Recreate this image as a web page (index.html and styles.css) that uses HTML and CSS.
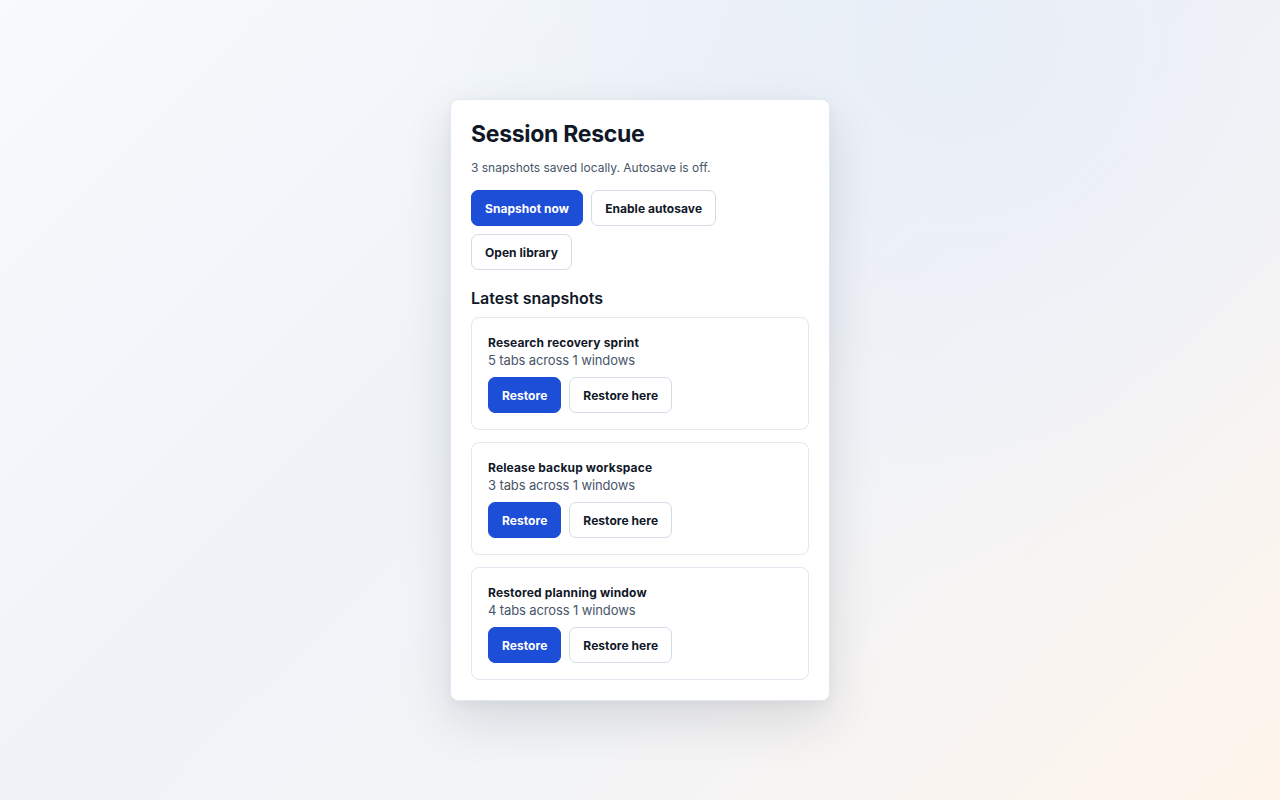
FILE: index.html
```html
<!DOCTYPE html>
<html lang="en">
<head>
<meta charset="utf-8">
<title>Session Rescue</title>
<link rel="stylesheet" href="styles.css">
</head>
<body>
<main class="panel">
  <h1 class="title">Session Rescue</h1>
  <p class="status">3 snapshots saved locally. Autosave is off.</p>
  <div class="actions">
    <button class="btn btn-primary">Snapshot now</button>
    <button class="btn">Enable autosave</button>
    <button class="btn">Open library</button>
  </div>
  <h2 class="section-title">Latest snapshots</h2>
  <ul class="snapshots">
    <li class="snapshot">
      <div class="snap-name">Research recovery sprint</div>
      <div class="snap-meta">5 tabs across 1 windows</div>
      <div class="snap-actions">
        <button class="btn btn-primary">Restore</button>
        <button class="btn">Restore here</button>
      </div>
    </li>
    <li class="snapshot">
      <div class="snap-name">Release backup workspace</div>
      <div class="snap-meta">3 tabs across 1 windows</div>
      <div class="snap-actions">
        <button class="btn btn-primary">Restore</button>
        <button class="btn">Restore here</button>
      </div>
    </li>
    <li class="snapshot">
      <div class="snap-name">Restored planning window</div>
      <div class="snap-meta">4 tabs across 1 windows</div>
      <div class="snap-actions">
        <button class="btn btn-primary">Restore</button>
        <button class="btn">Restore here</button>
      </div>
    </li>
  </ul>
</main>
</body>
</html>
```

FILE: styles.css
```css
* { box-sizing: border-box; }

html, body { height: 100%; }

body {
  margin: 0;
  min-height: 100vh;
  display: flex;
  align-items: center;
  justify-content: center;
  font-family: Inter, "Liberation Sans", sans-serif;
  color: #0f172a;
  background:
    radial-gradient(circle at 75% 5%, rgba(228, 236, 248, 0.6) 0%, rgba(228, 236, 248, 0) 45%),
    linear-gradient(135deg, #f8fafc 0%, #eff3f8 40%, #f3f4f6 65%, #fff5ec 100%);
}

.panel {
  width: 380px;
  background: #ffffff;
  border: 1px solid #e2e8f0;
  border-radius: 8px;
  padding: 20px;
  box-shadow: 0 20px 50px rgba(15, 23, 42, 0.12), 0 4px 12px rgba(15, 23, 42, 0.04);
}

.title {
  margin: 0 0 12px;
  font-size: 23px;
  line-height: 28px;
  font-weight: 700;
  color: #111827;
  letter-spacing: -0.3px;
}

.status {
  margin: 0 0 14px;
  font-size: 12px;
  line-height: 16px;
  color: #475569;
}

.actions {
  display: flex;
  flex-wrap: wrap;
  gap: 8px;
}

.btn {
  height: 36px;
  padding: 0 13px;
  border: 1px solid #d3dbe6;
  border-radius: 7px;
  background: #ffffff;
  color: #111827;
  font-family: Inter, "Liberation Sans", sans-serif;
  font-size: 12px;
  font-weight: 700;
  letter-spacing: 0.05px;
  cursor: pointer;
}

.btn-primary {
  background: #1d4ed8;
  border-color: #1d4ed8;
  color: #ffffff;
}

.section-title {
  margin: 18px 0 9px;
  font-size: 16px;
  line-height: 20px;
  font-weight: 600;
  color: #111827;
}

.snapshots {
  list-style: none;
  margin: 0;
  padding: 0;
  display: flex;
  flex-direction: column;
  gap: 12px;
}

.snapshot {
  border: 1px solid #e2e8f0;
  border-radius: 8px;
  padding: 16px;
}

.snap-name {
  font-size: 12px;
  line-height: 17px;
  font-weight: 700;
  color: #111827;
  letter-spacing: 0.15px;
}

.snap-meta {
  font-size: 13px;
  line-height: 18px;
  color: #475569;
  letter-spacing: -0.12px;
}

.snap-actions {
  display: flex;
  gap: 8px;
  margin-top: 8px;
}
```
